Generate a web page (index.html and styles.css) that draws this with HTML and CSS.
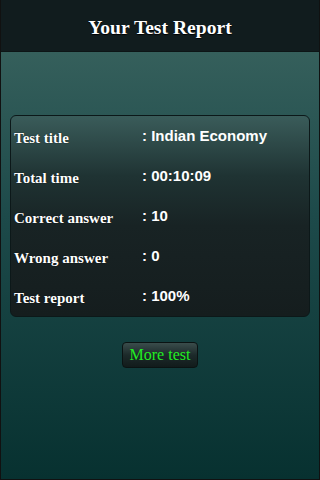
FILE: index.html
```html
<!DOCTYPE html>
<html lang="en">
<head>
  <meta charset="UTF-8">
  <meta name="viewport" content="width=device-width, initial-scale=1.0">
  <title>Your Test Report</title>
  <link rel="stylesheet" href="styles.css">
</head>
<body>

  <div class="page">
    <div class="header">
      <h1>Your Test Report</h1>
    </div>

    <div class="content">
      <div class="report">
        <div class="row">
          <span class="label">Test title</span>
          <span class="value">: Indian Economy</span>
        </div>
        <div class="row">
          <span class="label">Total time</span>
          <span class="value">: 00:10:09</span>
        </div>
        <div class="row">
          <span class="label">Correct answer</span>
          <span class="value">: 10</span>
        </div>
        <div class="row">
          <span class="label">Wrong answer</span>
          <span class="value">: 0</span>
        </div>
        <div class="row">
          <span class="label">Test report</span>
          <span class="value">: 100%</span>
        </div>
      </div>

      <div class="actions">
        <button class="more">More test</button>
      </div>
    </div>
  </div>

</body>
</html>
```

FILE: styles.css
```css
html, body {
  margin: 0;
  padding: 0;
  height: 100%;
}
body {
  background-color: #0f1a1b;
}
.page {
  height: 480px;
  box-sizing: border-box;
  border: 1px solid #111;
  border-top: none;
  display: flex;
  flex-direction: column;
  background: linear-gradient(to bottom, #3d6661 0%, #1d4a4a 45%, #073130 100%);
}
.header {
  height: 52px;
  box-sizing: border-box;
  padding-top: 5px;
  background-color: #111c1e;
  display: flex;
  align-items: center;
  justify-content: center;
  border-bottom: 1px solid #0d1516;
}
.header h1 {
  margin: 0;
  font-family: "Liberation Serif", serif;
  font-size: 19.6px;
  font-weight: bold;
  color: #fff;
  text-shadow: 0 1px 1px #000;
}
.content {
  padding: 63px 9px 0 9px;
}
.report {
  border: 1px solid #0c1819;
  border-radius: 6px;
  background: linear-gradient(to bottom, #3a5c5a 0%, #1f3333 30%, #182324 55%, #151d1e 100%);
  padding: 0 0 0 3px;
}
.row {
  display: flex;
  height: 40px;
  align-items: center;
}
.label {
  width: 128px;
  padding-top: 4px;
  font-family: "Liberation Serif", serif;
  font-size: 15px;
  font-weight: bold;
  color: #fff;
  text-shadow: 0 0 1px #000;
}
.value {
  padding-bottom: 2px;
  font-family: "Liberation Sans", Arial, sans-serif;
  font-size: 15px;
  font-weight: bold;
  color: #fff;
}
.actions {
  display: flex;
  justify-content: center;
  padding-top: 25px;
}
.more {
  width: 76px;
  height: 26px;
  padding: 0;
  font-family: "Liberation Serif", serif;
  font-size: 16px;
  color: #22ee22;
  background: linear-gradient(to bottom, #3a4d4c 0%, #1c2a2a 50%, #121b1b 100%);
  border: 1px solid #0b1313;
  border-radius: 4px;
  cursor: pointer;
}
```
